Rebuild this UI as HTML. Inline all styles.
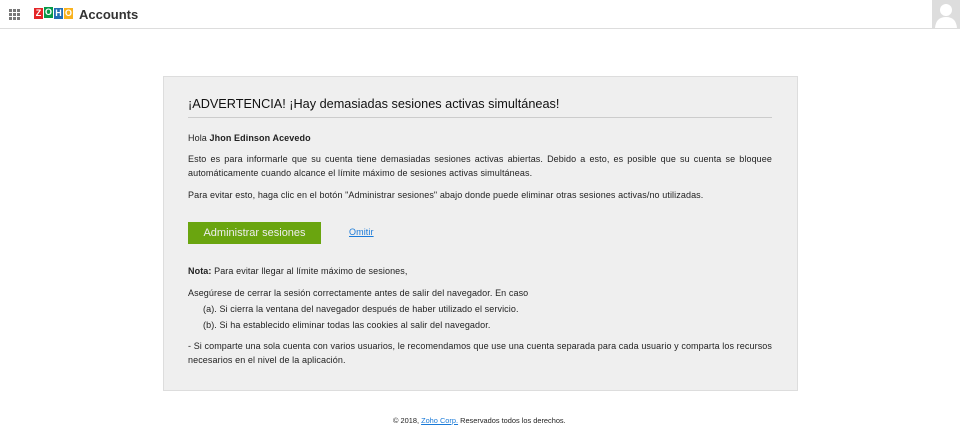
<!DOCTYPE html>
<html><head><meta charset="utf-8"><style>
body{margin:0;width:960px;height:430px;background:#fff;font-family:"Liberation Sans",Arial,sans-serif;position:relative;overflow:hidden;color:#000}
.top{position:absolute;left:0;top:0;width:960px;height:28px;border-bottom:1px solid #ddd}
.grid{position:absolute;left:9px;top:9px;width:11px;height:11px}
.grid i{position:absolute;width:3px;height:3px;background:#777}
.logo{position:absolute;left:34px;top:8px;height:13px}
.logo span{position:absolute;top:0;width:9px;height:11px;font:bold 9px/11px "Liberation Sans",sans-serif;color:#fff;text-align:center}
.acc{position:absolute;left:79px;top:7px;font-size:13px;font-weight:bold;color:#333}
.av{position:absolute;left:932px;top:0;width:28px;height:28px;background:#ddd;overflow:hidden}
.box{position:absolute;left:163px;top:76px;width:633px;height:313px;background:#efefef;border:1px solid #ddd}
.t{position:absolute;left:188px;top:97px;font-size:12.7px;color:#111}
.hr{position:absolute;left:188px;top:117px;width:584px;height:1px;background:#ccc}
.p{position:absolute;left:188px;width:584px;font-size:9px;letter-spacing:0.1px;line-height:14px;text-align:justify;color:#222}
.btn{position:absolute;left:188px;top:222px;width:133px;height:22px;background:#6aa50f;color:#eee;font-size:11px;line-height:22px;text-align:center}
a{color:#1a7ad8;text-decoration:underline}
.f{position:absolute;left:393px;top:416px;font-size:7.4px;color:#222}
</style></head><body>
<div class="top">
<div class="grid"><i style="left:0;top:0"></i><i style="left:4px;top:0"></i><i style="left:8px;top:0"></i><i style="left:0;top:4px"></i><i style="left:4px;top:4px"></i><i style="left:8px;top:4px"></i><i style="left:0;top:8px"></i><i style="left:4px;top:8px"></i><i style="left:8px;top:8px"></i></div>
<div class="logo"><span style="left:0;background:#e42527">Z</span><span style="left:10px;background:#089949;top:-1px">O</span><span style="left:20px;background:#226db4">H</span><span style="left:30px;background:#f9b21d">O</span></div>
<div class="acc">Accounts</div>
<div class="av"><svg width="28" height="28"><circle cx="14" cy="10" r="6" fill="#fff"/><path d="M3 28 Q4 17 14 17 Q24 17 25 28Z" fill="#fff"/></svg></div>
</div>
<div class="box"></div>
<div class="t">¡ADVERTENCIA! ¡Hay demasiadas sesiones activas simultáneas!</div>
<div class="hr"></div>
<div class="p" style="top:131px">Hola <b>Jhon Edinson Acevedo</b></div>
<div class="p" style="top:152px">Esto es para informarle que su cuenta tiene demasiadas sesiones activas abiertas. Debido a esto, es posible que su cuenta se bloquee automáticamente cuando alcance el límite máximo de sesiones activas simultáneas.</div>
<div class="p" style="top:188px">Para evitar esto, haga clic en el botón "Administrar sesiones" abajo donde puede eliminar otras sesiones activas/no utilizadas.</div>
<div class="btn">Administrar sesiones</div>
<div class="p" style="left:349px;width:60px;top:225px"><a>Omitir</a></div>
<div class="p" style="top:264px"><b>Nota:</b> Para evitar llegar al límite máximo de sesiones,</div>
<div class="p" style="top:286px">Asegúrese de cerrar la sesión correctamente antes de salir del navegador. En caso</div>
<div class="p" style="top:302px;left:203px;width:500px">(a). Si cierra la ventana del navegador después de haber utilizado el servicio.</div>
<div class="p" style="top:318px;left:203px;width:500px">(b). Si ha establecido eliminar todas las cookies al salir del navegador.</div>
<div class="p" style="top:339px">- Si comparte una sola cuenta con varios usuarios, le recomendamos que use una cuenta separada para cada usuario y comparta los recursos necesarios en el nivel de la aplicación.</div>
<div class="f">© 2018, <a>Zoho Corp.</a> Reservados todos los derechos.</div>
</body></html>
